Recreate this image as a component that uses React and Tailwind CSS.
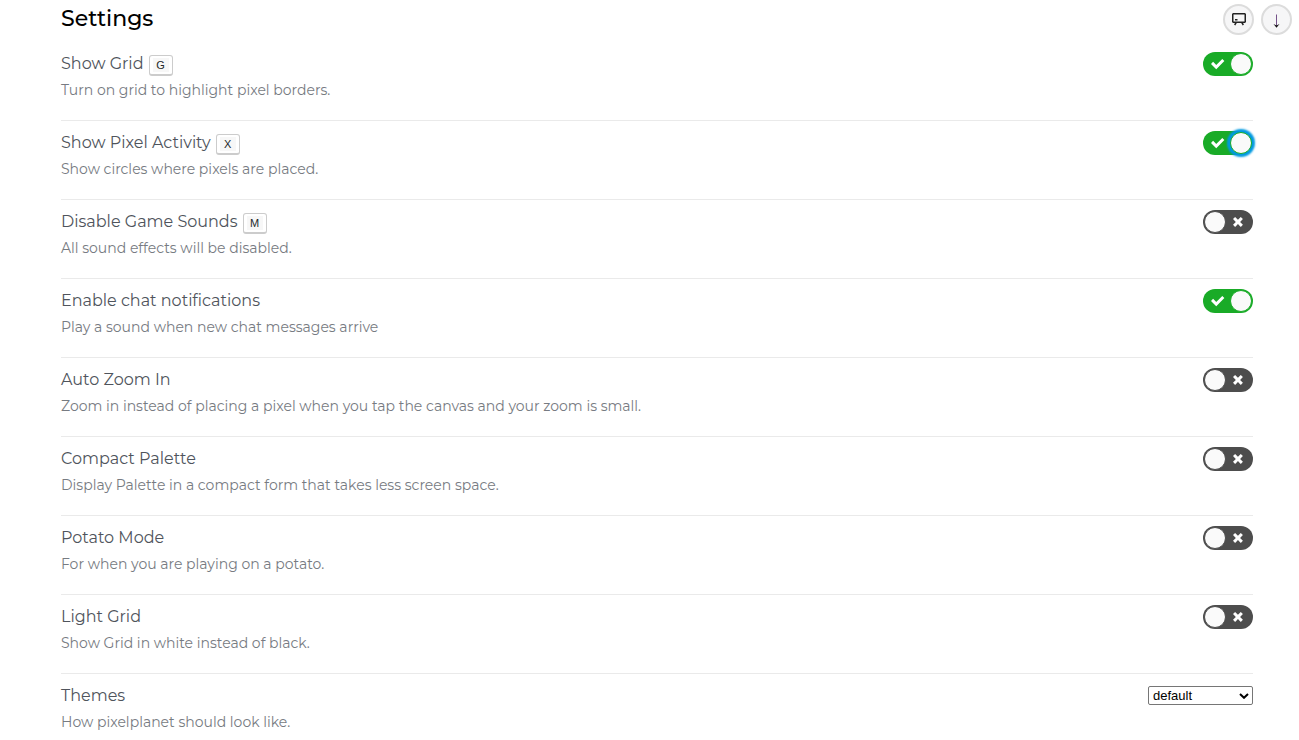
import { useState } from 'react';
import { clsx } from 'clsx';

const SWITCHES = [
    { id: 'grid', title: 'Show Grid', keyBind: 'G', text: 'Turn on grid to highlight pixel borders.', on: true },
    { id: 'activity', title: 'Show Pixel Activity', keyBind: 'X', text: 'Show circles where pixels are placed.', on: true, focused: true },
    { id: 'mute', title: 'Disable Game Sounds', keyBind: 'M', text: 'All sound effects will be disabled.', on: false },
    { id: 'chat', title: 'Enable chat notifications', text: 'Play a sound when new chat messages arrive', on: true },
    { id: 'zoom', title: 'Auto Zoom In', text: 'Zoom in instead of placing a pixel when you tap the canvas and your zoom is small.', on: false },
    { id: 'compact', title: 'Compact Palette', text: 'Display Palette in a compact form that takes less screen space.', on: false },
    { id: 'potato', title: 'Potato Mode', text: 'For when you are playing on a potato.', on: false },
    { id: 'light', title: 'Light Grid', text: 'Show Grid in white instead of black.', on: false },
];

export default function App() {
    return (
        <div className="bg-white font-['Montserrat','Inter',sans-serif] text-black">
            <header className="flex h-[42px] items-start justify-between pt-1 pr-[7px] pl-[61px]">
                <h2 className="text-[22px] leading-[30px] font-medium">Settings</h2>
                <div className="flex gap-[7px]">
                    <RoundButton label="Open in window"><WindowIcon /></RoundButton>
                    <RoundButton label="Close"><ArrowIcon /></RoundButton>
                </div>
            </header>

            <main className="pr-[46px] pl-[61px]">
                {SWITCHES.map((item) => <SwitchItem key={item.id} {...item} />)}
                <SelectItem />
            </main>
        </div>
    );
}

function RoundButton({ label, children }) {
    return (
        <button aria-label={label} className="flex size-[31px] items-center justify-center rounded-full border-2 border-[#dcdcdc] bg-[#f6f6f7]">
            {children}
        </button>
    );
}

function SettingText({ id, title, keyBind, text }) {
    return (
        <div>
            <div className="flex h-6 items-center gap-[5px]">
                <label htmlFor={id} className="text-[16px] leading-6 font-normal text-[#4f545c]">{title}</label>
                {keyBind && (
                    <kbd className="mt-[3px] flex h-[21px] min-w-[23px] items-center justify-center rounded-[3px] border border-b-2 border-[#ccc] bg-white px-[3px]">
                        <span className="flex h-[14px] min-w-4 items-center justify-center bg-[#f7f7f7] pt-px font-['Liberation_Sans',sans-serif] text-[11px] leading-none text-[#242729]">{keyBind}</span>
                    </kbd>
                )}
            </div>
            <p className="mt-[3px] text-[14px] leading-[22px] font-normal text-[#777b82]">{text}</p>
        </div>
    );
}

function SwitchItem({ on, focused, ...item }) {
    const [checked, setChecked] = useState(on);
    return (
        <div className="flex h-[79px] items-start justify-between border-b border-[#eaeaea] pt-[10px]">
            <SettingText {...item} />
            <div className="relative h-6 w-[50px] shrink-0">
                <input
                    id={item.id} type="checkbox" role="switch"
                    checked={checked} onChange={(e) => setChecked(e.target.checked)}
                    className="block h-6 w-[50px] cursor-pointer appearance-none rounded-full bg-[#4d4d4d] outline-none checked:bg-[#19ab27]"
                />
                {checked ? <CheckIcon /> : <CrossIcon />}
                <span
                    className={clsx(
                        'pointer-events-none absolute top-px size-[22px] rounded-full border bg-[#fafafa]',
                        checked ? 'left-[27px] border-[#19ab27]' : 'left-px border-[#4d4d4d]',
                        focused && 'shadow-[0_0_2px_3px_#0099e0]',
                    )}
                />
            </div>
        </div>
    );
}

function SelectItem() {
    return (
        <div className="flex items-start justify-between pt-[10px]">
            <SettingText id="theme" title="Themes" text="How pixelplanet should look like." />
            <div className="relative mt-[2px]">
                <select id="theme" className="block h-[19px] w-[105px] appearance-none rounded-[2px] border border-[#767676] bg-white pl-1 font-['Liberation_Sans',sans-serif] text-[13px] leading-[16px] text-black">
                    <option>default</option>
                </select>
                <svg viewBox="0 0 10 6" className="pointer-events-none absolute top-[7px] right-1 h-[6px] w-[10px]" fill="none" stroke="#000" strokeWidth="2">
                    <path d="M1 1l4 3.8L9 1" />
                </svg>
            </div>
        </div>
    );
}

function CheckIcon() {
    return (
        <svg viewBox="0 0 14 11" className="pointer-events-none absolute top-[7px] left-2 h-[11px] w-[14px]" fill="#fff">
            <path d="M11.264 0L5.26 6.004 2.103 2.847 0 4.95l5.26 5.26 8.108-8.107L11.264 0" />
        </svg>
    );
}

function CrossIcon() {
    return (
        <svg viewBox="0 0 10 10" className="pointer-events-none absolute top-[7px] right-[10px] size-[10px]" fill="#fff">
            <path d="M9.9 2.12L7.78 0 4.95 2.828 2.12 0 0 2.12l2.83 2.83L0 7.776 2.123 9.9 4.95 7.07 7.78 9.9 9.9 7.776 7.072 4.95 9.9 2.12" />
        </svg>
    );
}

function WindowIcon() {
    return (
        <svg viewBox="0 0 14 13" className="h-[13px] w-[14px]" fill="#222">
            <path fillRule="evenodd" d="M1 0h12l1 1v8l-1 1h-2l1 1.500-1.300 1L9.200 10H4.800l-1.500 2.500L2 11.500 3 10H1L0 9V1zM1.500 1.500v7h11v-7z" />
            <path d="M3 6h2.500v1.500H3z" />
        </svg>
    );
}

function ArrowIcon() {
    return (
        <svg viewBox="0 0 8 14" className="mt-[3px] h-[14px] w-2">
            <path d="M3.500 0.500v11.500" fill="none" stroke="#75528a" />
            <path d="M0.500 10L3.500 11.500l3-1.500-3 3.800z" fill="#111" />
        </svg>
    );
}
